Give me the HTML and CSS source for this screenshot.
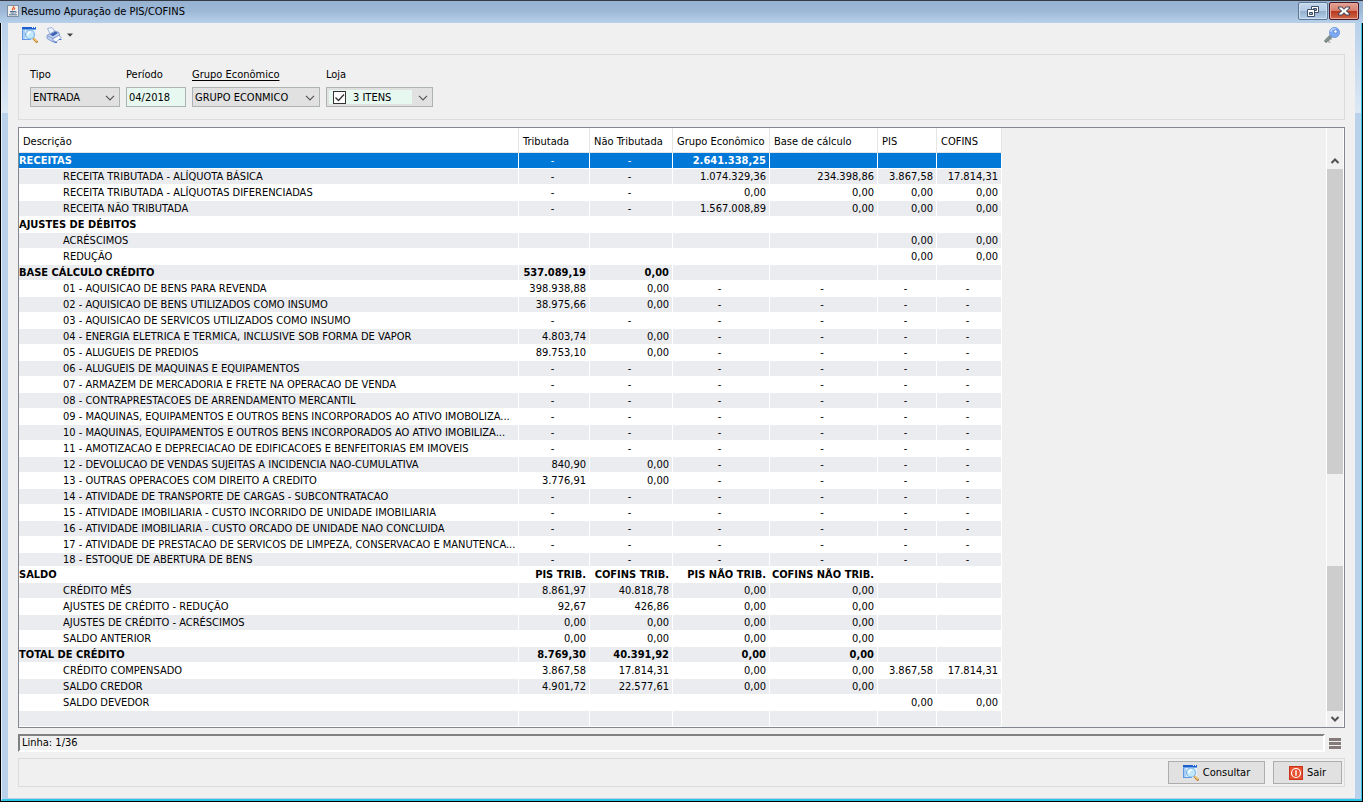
FILE: index.html
```html
<!DOCTYPE html>
<html lang="pt-BR">
<head>
<meta charset="utf-8">
<title>Resumo Apuração de PIS/COFINS</title>
<link rel="stylesheet" href="styles.css">
</head>
<body>
<svg class="defs" aria-hidden="true">
  <symbol id="search" viewBox="0 0 16 16">
    <path d="M0 0h14v13H0z" fill="#e6f3fd"/>
    <path d="M0 3h3v9H0z" fill="#a9cdf6"/>
    <path d="M0 0h14v2H0z" fill="#1e5fd0"/>
    <path d="M0 2h14v1H0z" fill="#6fa6ea"/>
    <path d="M0 3h1v10H0zM0 12h9v1H0z" fill="#5c97e6"/>
    <path d="M10 0h1v1h-1zM12 0h1v1h-1z" fill="#fff"/>
    <path d="M11 11l4.500 4.500" stroke="#b97c2c" stroke-width="2.400"/>
    <path d="M11.500 11l3.500 3.500" stroke="#f6cf78" stroke-width="1.200"/>
    <circle cx="8" cy="7.500" r="4.500" fill="#bfe8fb" stroke="#86b4e2" stroke-width="1.200"/>
    <path d="M5.800 8.500a3 3 0 0 1 3-3.500" stroke="#fff" stroke-width="1.400" fill="none"/>
  </symbol>
  <symbol id="chev" viewBox="0 0 10 6"><path d="M1 0.800l4 4 4-4" fill="none" stroke="#555" stroke-width="1.200"/></symbol>
  <symbol id="arrow" viewBox="0 0 10 6"><path d="M1.500 1l3.500 3.500L8.500 1" fill="none" stroke="#505050" stroke-width="2"/></symbol>
</svg>
<div class="window">
  <header class="titlebar">
    <svg class="app-icon" viewBox="0 0 12 12"><path d="M0 0h12v12H0z" fill="#7f8fa3"/><path d="M1 1h10v10H1z" fill="#f1efec"/><path d="M6.500 1c1.300 1.500-2.500 2.200-.8 4.300M8.200 2.800c-1.500.8-1 1.200-1 2.200" stroke="#e0592a" stroke-width="1.100" fill="none"/><path d="M3 6.500h5.500M3.500 8h4M2 9.800h8M8.500 6.500c1.500 0 1 1.500-.5 1.500" stroke="#4d6f96" fill="none"/></svg>
    <h1 class="title">Resumo Apuração de PIS/COFINS</h1>
    <button class="winbtn restore" aria-label="Restaurar"><svg width="12" height="11" viewBox="0 0 12 11"><path d="M4.500.5h7v6h-7z" fill="#fff" stroke="#414f66"/><path d="M6.500 2.500h3v2h-3z" fill="#8fa8c6" stroke="#414f66"/><path d="M.5 3.500h7v7h-7z" fill="#fff" stroke="#414f66"/><path d="M2.500 6.500h3v2h-3z" fill="#8fa8c6" stroke="#414f66"/></svg></button>
    <button class="winbtn close" aria-label="Fechar"><svg width="12" height="10" viewBox="0 0 12 10"><path d="M0 .5h4l2 2 2-2h4v2L9 5l3 2.500v2H8l-2-2-2 2H0v-2L3 5 0 2.500z" fill="#4a4a5c"/><path d="M1.200 1.500h2.500L6 3.800l2.300-2.300h2.500v.8L7.800 5l3 2.700v.8H8.300L6 6.200 3.700 8.500H1.200v-.8l3-2.700-3-2.700z" fill="#fff"/></svg></button>
  </header>
  <div class="frame">
  <main class="content">
    <nav class="toolbar">
      <button class="tool" aria-label="Consultar"><svg width="16" height="16"><use href="#search"/></svg></button>
      <button class="tool" aria-label="Imprimir"><svg width="16" height="16" viewBox="0 0 16 16"><path d="M1.500 1.500L6 .5l4 5.500-5.500 2z" fill="#eef4ff" stroke="#8aa4d6" stroke-width=".8"/><path d="M1 8.500L9 4l4 1.500 1 5-7 4.500-6-3.500z" fill="#c3d1f0" stroke="#7590cc" stroke-width=".8"/><path d="M4 7.500l5.500-3L12 6l-5 3.300z" fill="#3d62b4"/><path d="M1 8.500l6 3L13.500 8M7 11.500V15" fill="none" stroke="#7590cc" stroke-width=".8"/><path d="M6.500 12.500l6-4 3 2-5.500 4.500z" fill="#fff" stroke="#8aa4d6" stroke-width=".8"/><path d="M8 15.200l3 .3M13 12.500h2.500" stroke="#4a78d0" stroke-width="1.200"/></svg></button>
      <button class="tool" aria-label="Opções de impressão"><svg width="6" height="4" viewBox="0 0 6 4"><path d="M0 .5h6L3 3.800z" fill="#444"/></svg></button>
      <button class="tool key" aria-label="Permissões"><svg width="16" height="16" viewBox="0 0 16 16"><path d="M8 8L1 15" stroke="#6f7f7d" stroke-width="3.200"/><path d="M7.500 8L1.500 14" stroke="#aab8b6" stroke-width="1"/><path d="M2.500 11.500l3 3M4.500 9.500l3 3" stroke="#7c8a88" stroke-width="1.200"/><path d="M4 15.500h3" stroke="#c8c8c8"/><circle cx="10.500" cy="5.500" r="5" fill="#7da8f2" stroke="#6b97e2"/><path d="M6.500 5a4 3.500 0 0 1 5.500-3" stroke="#b8d2fb" stroke-width="1.600" fill="none"/><circle cx="11.500" cy="4.500" r="1.700" fill="#fff" stroke="#5580cc" stroke-width=".8"/></svg></button>
    </nav>
    <form class="filters">
      <div class="field tipo"><label for="tipo">Tipo</label><div class="combo"><select id="tipo"><option>ENTRADA</option></select><svg class="chev"><use href="#chev"/></svg></div></div>
      <div class="field periodo"><label for="periodo">Período</label><input id="periodo" class="text" type="text" value="04/2018"></div>
      <div class="field grupo"><label for="grupo" class="link">Grupo Econômico</label><div class="combo"><select id="grupo"><option>GRUPO ECONMICO</option></select><svg class="chev"><use href="#chev"/></svg></div></div>
      <div class="field loja"><label for="loja">Loja</label><div class="combo multi"><label class="items"><span class="tick"><input id="loja" type="checkbox" checked><svg viewBox="0 0 13 13"><path d="M2.500 6.500l3 3 5.500-6" fill="none" stroke="#333" stroke-width="1.300"/></svg></span>3 ITENS</label><button type="button" class="open" aria-label="Abrir lojas"></button><svg class="chev"><use href="#chev"/></svg></div></div>
    </form>
    <section class="grid">
      <div class="view">
      <table>
        <colgroup><col class="c1"><col class="c2"><col class="c3"><col class="c4"><col class="c5"><col class="c6"><col class="c7"></colgroup>
        <thead><tr><th>Descrição</th><th>Tributada</th><th>Não Tributada</th><th>Grupo Econômico</th><th>Base de cálculo</th><th>PIS</th><th>COFINS</th></tr></thead>
        <tbody>
        <tr class="group selected"><td>RECEITAS</td><td class="d">-</td><td class="d">-</td><td>2.641.338,25</td><td></td><td></td><td></td></tr>
        <tr><td>RECEITA TRIBUTADA - ALÍQUOTA BÁSICA</td><td class="d">-</td><td class="d">-</td><td>1.074.329,36</td><td>234.398,86</td><td>3.867,58</td><td>17.814,31</td></tr>
        <tr><td>RECEITA TRIBUTADA - ALÍQUOTAS DIFERENCIADAS</td><td class="d">-</td><td class="d">-</td><td>0,00</td><td>0,00</td><td>0,00</td><td>0,00</td></tr>
        <tr><td>RECEITA NÃO TRIBUTADA</td><td class="d">-</td><td class="d">-</td><td>1.567.008,89</td><td>0,00</td><td>0,00</td><td>0,00</td></tr>
        <tr class="group"><td>AJUSTES DE DÉBITOS</td><td></td><td></td><td></td><td></td><td></td><td></td></tr>
        <tr><td>ACRÉSCIMOS</td><td></td><td></td><td></td><td></td><td>0,00</td><td>0,00</td></tr>
        <tr><td>REDUÇÃO</td><td></td><td></td><td></td><td></td><td>0,00</td><td>0,00</td></tr>
        <tr class="group"><td>BASE CÁLCULO CRÉDITO</td><td>537.089,19</td><td>0,00</td><td></td><td></td><td></td><td></td></tr>
        <tr><td>01 - AQUISICAO DE BENS PARA REVENDA</td><td>398.938,88</td><td>0,00</td><td class="d">-</td><td class="d">-</td><td class="d">-</td><td class="d">-</td></tr>
        <tr><td>02 - AQUISICAO DE BENS UTILIZADOS COMO INSUMO</td><td>38.975,66</td><td>0,00</td><td class="d">-</td><td class="d">-</td><td class="d">-</td><td class="d">-</td></tr>
        <tr><td>03 - AQUISICAO DE SERVICOS UTILIZADOS COMO INSUMO</td><td class="d">-</td><td class="d">-</td><td class="d">-</td><td class="d">-</td><td class="d">-</td><td class="d">-</td></tr>
        <tr><td>04 - ENERGIA ELETRICA E TERMICA, INCLUSIVE SOB FORMA DE VAPOR</td><td>4.803,74</td><td>0,00</td><td class="d">-</td><td class="d">-</td><td class="d">-</td><td class="d">-</td></tr>
        <tr><td>05 - ALUGUEIS DE PREDIOS</td><td>89.753,10</td><td>0,00</td><td class="d">-</td><td class="d">-</td><td class="d">-</td><td class="d">-</td></tr>
        <tr><td>06 - ALUGUEIS DE MAQUINAS E EQUIPAMENTOS</td><td class="d">-</td><td class="d">-</td><td class="d">-</td><td class="d">-</td><td class="d">-</td><td class="d">-</td></tr>
        <tr><td>07 - ARMAZEM DE MERCADORIA E FRETE NA OPERACAO DE VENDA</td><td class="d">-</td><td class="d">-</td><td class="d">-</td><td class="d">-</td><td class="d">-</td><td class="d">-</td></tr>
        <tr><td>08 - CONTRAPRESTACOES DE ARRENDAMENTO MERCANTIL</td><td class="d">-</td><td class="d">-</td><td class="d">-</td><td class="d">-</td><td class="d">-</td><td class="d">-</td></tr>
        <tr><td>09 - MAQUINAS, EQUIPAMENTOS E OUTROS BENS INCORPORADOS AO ATIVO IMOBOLIZA...</td><td class="d">-</td><td class="d">-</td><td class="d">-</td><td class="d">-</td><td class="d">-</td><td class="d">-</td></tr>
        <tr><td>10 - MAQUINAS, EQUIPAMENTOS E OUTROS BENS INCORPORADOS AO ATIVO IMOBILIZA...</td><td class="d">-</td><td class="d">-</td><td class="d">-</td><td class="d">-</td><td class="d">-</td><td class="d">-</td></tr>
        <tr><td>11 - AMOTIZACAO E DEPRECIACAO DE EDIFICACOES E BENFEITORIAS EM IMOVEIS</td><td class="d">-</td><td class="d">-</td><td class="d">-</td><td class="d">-</td><td class="d">-</td><td class="d">-</td></tr>
        <tr><td>12 - DEVOLUCAO DE VENDAS SUJEITAS A INCIDENCIA NAO-CUMULATIVA</td><td>840,90</td><td>0,00</td><td class="d">-</td><td class="d">-</td><td class="d">-</td><td class="d">-</td></tr>
        <tr><td>13 - OUTRAS OPERACOES COM DIREITO A CREDITO</td><td>3.776,91</td><td>0,00</td><td class="d">-</td><td class="d">-</td><td class="d">-</td><td class="d">-</td></tr>
        <tr><td>14 - ATIVIDADE DE TRANSPORTE DE CARGAS - SUBCONTRATACAO</td><td class="d">-</td><td class="d">-</td><td class="d">-</td><td class="d">-</td><td class="d">-</td><td class="d">-</td></tr>
        <tr><td>15 - ATIVIDADE IMOBILIARIA - CUSTO INCORRIDO DE UNIDADE IMOBILIARIA</td><td class="d">-</td><td class="d">-</td><td class="d">-</td><td class="d">-</td><td class="d">-</td><td class="d">-</td></tr>
        <tr><td>16 - ATIVIDADE IMOBILIARIA - CUSTO ORCADO DE UNIDADE NAO CONCLUIDA</td><td class="d">-</td><td class="d">-</td><td class="d">-</td><td class="d">-</td><td class="d">-</td><td class="d">-</td></tr>
        <tr><td>17 - ATIVIDADE DE PRESTACAO DE SERVICOS DE LIMPEZA, CONSERVACAO E MANUTENCA...</td><td class="d">-</td><td class="d">-</td><td class="d">-</td><td class="d">-</td><td class="d">-</td><td class="d">-</td></tr>
        <tr class="short"><td>18 - ESTOQUE DE ABERTURA DE BENS</td><td class="d">-</td><td class="d">-</td><td class="d">-</td><td class="d">-</td><td class="d">-</td><td class="d">-</td></tr>
        <tr class="group"><td>SALDO</td><td>PIS TRIB.</td><td>COFINS TRIB.</td><td>PIS NÃO TRIB.</td><td>COFINS NÃO TRIB.</td><td></td><td></td></tr>
        <tr><td>CRÉDITO MÊS</td><td>8.861,97</td><td>40.818,78</td><td>0,00</td><td>0,00</td><td></td><td></td></tr>
        <tr><td>AJUSTES DE CRÉDITO - REDUÇÃO</td><td>92,67</td><td>426,86</td><td>0,00</td><td>0,00</td><td></td><td></td></tr>
        <tr><td>AJUSTES DE CRÉDITO - ACRÉSCIMOS</td><td>0,00</td><td>0,00</td><td>0,00</td><td>0,00</td><td></td><td></td></tr>
        <tr><td>SALDO ANTERIOR</td><td>0,00</td><td>0,00</td><td>0,00</td><td>0,00</td><td></td><td></td></tr>
        <tr class="group"><td>TOTAL DE CRÉDITO</td><td>8.769,30</td><td>40.391,92</td><td>0,00</td><td>0,00</td><td></td><td></td></tr>
        <tr><td>CRÉDITO COMPENSADO</td><td>3.867,58</td><td>17.814,31</td><td>0,00</td><td>0,00</td><td>3.867,58</td><td>17.814,31</td></tr>
        <tr><td>SALDO CREDOR</td><td>4.901,72</td><td>22.577,61</td><td>0,00</td><td>0,00</td><td></td><td></td></tr>
        <tr><td>SALDO DEVEDOR</td><td></td><td></td><td></td><td></td><td>0,00</td><td>0,00</td></tr>
        <tr><td></td><td></td><td></td><td></td><td></td><td></td><td></td></tr>
        </tbody>
      </table>
      </div>
      <div class="scroll">
        <button class="step" aria-label="Rolar para cima"><svg class="up" width="10" height="6"><use href="#arrow"/></svg></button>
        <div class="thumb upper"></div>
        <div class="gap"></div>
        <div class="thumb lower"></div>
        <button class="step" aria-label="Rolar para baixo"><svg width="10" height="6"><use href="#arrow"/></svg></button>
      </div>
    </section>
    <div class="statusrow">
      <output class="status">Linha: 1/36</output>
      <button class="menu" aria-label="Menu"><svg width="12" height="11" viewBox="0 0 12 11"><path d="M0 0h12v3H0zM0 4h12v3H0zM0 8h12v3H0z" fill="#857c7a"/></svg></button>
    </div>
    <footer class="actions">
      <button class="btn consultar"><svg width="16" height="16"><use href="#search"/></svg>Consultar</button>
      <button class="btn sair"><svg width="14" height="14" viewBox="0 0 14 14"><path d="M0 0h14v14H0z" fill="#c8341b"/><path d="M1 1h12v12H1z" fill="#e8502f"/><circle cx="7" cy="7" r="4.500" fill="none" stroke="#fff" stroke-width="1.200"/><path d="M7 4.300v5.400" stroke="#fff" stroke-width="1.400"/></svg>Sair</button>
    </footer>
  </main>
  </div>
</div>
</body>
</html>
```
FILE: styles.css
```css
* { box-sizing: border-box; }
body {
  margin: 0;
  background: #000;
  color: #000;
  font: 11px/15px "DejaVu Sans Condensed", "DejaVu Sans", sans-serif;
}
button, input, select { font: inherit; color: inherit; margin: 0; padding: 0; border-radius: 0; }
button { border: 0; background: none; }
svg { display: block; }
.defs { position: absolute; width: 0; height: 0; }

.window {
  min-height: 100vh;
  display: flex;
  flex-direction: column;
  border-top: 1px solid #333a44;
  border-bottom: 1px solid #000;
}
.titlebar {
  height: 22px;
  display: flex;
  align-items: flex-start;
  padding-left: 7px;
  background: linear-gradient(#98b3d2, #9db8d7 45%, #b7d0ea);
}
.app-icon { width: 12px; height: 12px; margin: 4px 2px 0 0; }
.title { flex: 1; margin: 3px 0 0; font: inherit; }
.winbtn {
  width: 30px;
  height: 18px;
  margin-top: 1px;
  display: flex;
  align-items: center;
  justify-content: center;
  border: 1px solid #5c7696;
  border-radius: 2px;
}
.restore { background: linear-gradient(#c3d7ec, #b5cce6 48%, #93aecc 50%, #b4cfe9); box-shadow: inset 0 0 0 1px #cfdff0; }
.close { margin: 1px 4px 0 1px; border-color: #4a1522; background: linear-gradient(#e3a295, #d67f6e 48%, #b8341c 50%, #cf6a4a); box-shadow: inset 0 0 0 1px #e3a79b; }

.frame {
  flex: 1;
  display: flex;
  padding: 0 6px 1px;
  border: 0 solid #2cc5e6;
  border-width: 0 1px 2px;
  border-left-color: #e6eef6;
  margin: 0 1px;
  background: linear-gradient(#b9d1ea, #dce8f5 90px, #b9d1ea 90px);
}
.content {
  flex: 1;
  min-width: 0;
  display: flex;
  flex-direction: column;
  padding: 0 10px;
  background: #f0f0f0;
}
.toolbar { height: 31px; padding: 4px 5px 0 4px; display: flex; align-items: flex-start; gap: 8px; }
.tool { height: 16px; display: flex; align-items: center; }
.tool:nth-child(3) { margin-left: -3px; }
.key { margin-left: auto; }

.filters {
  display: flex;
  gap: 6px;
  padding: 12px 11px;
  border: 1px solid #dcdcdc;
}
.field { display: flex; flex-direction: column; gap: 5px; }
.tipo { width: 90px; }
.periodo { width: 60px; }
.grupo { width: 128px; }
.loja { width: 107px; }
.link { text-decoration: underline; text-underline-offset: 2px; }
.combo { display: grid; height: 20px; align-items: center; }
.combo select, .combo .chev { grid-area: 1 / 1; }
.combo select {
  width: 100%;
  height: 20px;
  padding: 0 2px;
  appearance: none;
  border: 1px solid #adb2b5;
  background: #e1e1e1;
}
.chev { justify-self: end; width: 10px; height: 6px; margin: 2px 5px 0 0; pointer-events: none; }
.text { width: 100%; height: 20px; padding: 0 2px; border: 1px solid #adb2b5; background: #e6f8f0; }
.multi { grid-template-columns: 1fr 20px; border: 1px solid #adb2b5; padding-left: 2px; background: #e1e1e1; }
.multi .items { height: 14px; display: flex; align-items: center; gap: 7px; padding-left: 4px; background: #e6f8f0; }
.multi .open { grid-area: 1 / 2; height: 18px; }
.multi .chev { grid-area: 1 / 2; margin-right: 4px; }
.tick { display: grid; width: 13px; height: 13px; }
.tick input { grid-area: 1 / 1; appearance: none; width: 13px; height: 13px; border: 1px solid #333; background: #fff; }
.tick svg { grid-area: 1 / 1; pointer-events: none; }

.grid { display: flex; margin-top: 7px; border: 1px solid #828790; }
.view { flex: 1; min-width: 0; overflow: hidden; }
table { width: 983px; table-layout: fixed; border-collapse: separate; border-spacing: 0; background: #fff; }
.c1 { width: 500px; }
.c2 { width: 71px; }
.c3 { width: 83px; }
.c4 { width: 97px; }
.c5 { width: 108px; }
.c6 { width: 59px; }
.c7 { width: 65px; }
th {
  height: 25px;
  padding: 2px 0 0 4px;
  text-align: left;
  font-weight: normal;
  white-space: nowrap;
  border-right: 1px solid #e5e5e5;
  border-bottom: 1px solid #e5e5e5;
}
td {
  height: 16px;
  padding: 0 3px 0 0;
  text-align: right;
  white-space: nowrap;
  line-height: 15px;
  border-right: 1px solid #fff;
  border-bottom: 1px solid #fff;
}
td:first-child { padding: 0 0 0 44px; text-align: left; overflow: hidden; }
.group td { font-weight: bold; }
.group td:first-child { padding-left: 0; }
td.d { text-align: center; font-weight: normal; }
tbody tr:nth-child(even) { background: #eaecf0; }
tbody .selected { background: #0078d7; color: #fff; }
.short td { height: 14px; line-height: 13px; }

.scroll { width: 18px; padding-top: 25px; display: flex; flex-direction: column; border-left: 1px solid #fff; border-right: 1px solid #fff; }
.step { height: 16px; display: flex; align-items: center; justify-content: center; }
.up { transform: rotate(180deg); }
.thumb { background: #cdcdcd; }
.upper { flex: 305; }
.gap { flex: 92; }
.lower { flex: 145; }

.statusrow { display: flex; align-items: center; margin-top: 6px; }
.status {
  flex: 1;
  height: 18px;
  padding-left: 2px;
  line-height: 14px;
  border: 2px solid #fff;
  border-top-color: #808080;
  border-left-color: #808080;
}
.menu { width: 20px; display: flex; justify-content: center; }

.actions {
  display: flex;
  justify-content: flex-end;
  gap: 8px;
  margin: 6px 0 11px;
  padding: 2px;
  border: 1px solid #dcdcdc;
}
.btn {
  height: 23px;
  display: flex;
  align-items: center;
  justify-content: center;
  gap: 4px;
  border: 1px solid #adadad;
  background: #e1e1e1;
}
.consultar { width: 97px; }
.sair { width: 69px; }
```
